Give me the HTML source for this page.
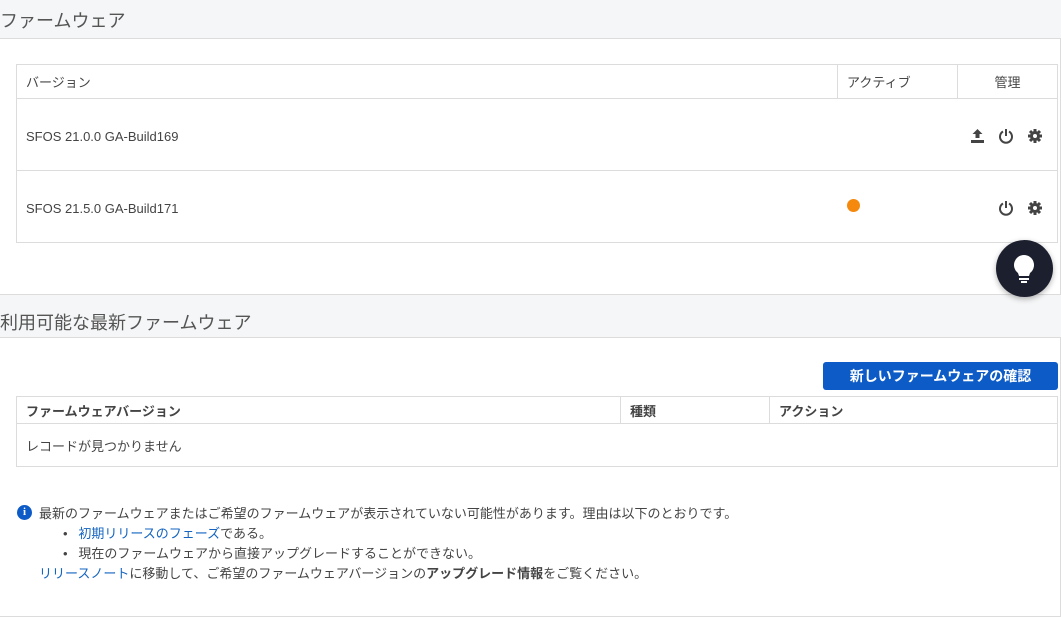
<!DOCTYPE html><html><head><meta charset="utf-8"><style>
*{box-sizing:border-box;margin:0;padding:0}
body{width:1061px;height:607px;overflow:hidden;background:#f5f6f7;font-family:"Liberation Sans","Noto Sans CJK JP",sans-serif;color:#444;position:relative}
.abs{position:absolute}
.h{font-size:18px;color:#555}
.panel{background:#fff;border:1px solid #dcdcdc}
table{border-collapse:collapse;position:absolute;font-size:13px;color:#444}
td{border:1px solid #dcdcdc;padding:0 9px}
.ic{position:absolute}
a{color:#1565c0;text-decoration:none}
</style></head><body>
<div class="abs h" style="left:0;top:7px">ファームウェア</div>
<div class="abs panel" style="left:0;top:38px;width:1061px;height:257px;border-left:none"></div>
<table style="left:16px;top:64px;width:1042px">
<tr style="height:34px"><td style="width:821px">バージョン</td><td style="width:120px">アクティブ</td><td style="text-align:center">管理</td></tr>
<tr style="height:72px"><td style="border-right:none;padding-top:4px">SFOS 21.0.0 GA-Build169</td><td style="border-left:none;border-right:none"></td><td style="border-left:none"></td></tr>
<tr style="height:72px"><td style="border-right:none;padding-top:4px">SFOS 21.5.0 GA-Build171</td><td style="border-left:none;border-right:none"></td><td style="border-left:none"></td></tr>
</table>
<div class="abs" style="left:847px;top:199px;width:13px;height:13px;border-radius:50%;background:#f5890d"></div>
<svg class="ic" style="left:969px;top:128px" width="17" height="16" viewBox="0 0 17 16"><path d="M8.5 1 L3.5 6 H6.5 V10 H10.5 V6 H13.5Z M2 12 H15 V15 H2Z" fill="#444"/></svg>
<svg class="ic" style="left:998px;top:128px" width="16" height="16" viewBox="0 0 16 16"><path d="M5 3.5 A6 6 0 1 0 11 3.5" fill="none" stroke="#444" stroke-width="2"/><path d="M8 1V8" stroke="#444" stroke-width="2"/></svg>
<svg class="ic" style="left:998px;top:200px" width="16" height="16" viewBox="0 0 16 16"><path d="M5 3.5 A6 6 0 1 0 11 3.5" fill="none" stroke="#444" stroke-width="2"/><path d="M8 1V8" stroke="#444" stroke-width="2"/></svg>
<svg class="ic" style="left:1027px;top:128px" width="16" height="16" viewBox="0 0 16 16"><g fill="#444"><circle cx="8" cy="8" r="5"/><g stroke="#444" stroke-width="3"><path d="M8 1V15M1 8H15M3 3L13 13M13 3L3 13"/></g></g><circle cx="8" cy="8" r="2" fill="#fff"/></svg>
<svg class="ic" style="left:1027px;top:200px" width="16" height="16" viewBox="0 0 16 16"><g fill="#444"><circle cx="8" cy="8" r="5"/><g stroke="#444" stroke-width="3"><path d="M8 1V15M1 8H15M3 3L13 13M13 3L3 13"/></g></g><circle cx="8" cy="8" r="2" fill="#fff"/></svg>
<div class="abs" style="left:996px;top:240px;width:57px;height:57px;border-radius:50%;background:#1c1f2e;box-shadow:0 2px 6px rgba(0,0,0,.3)"></div>
<svg class="ic" style="left:1011px;top:253px" width="26" height="32" viewBox="0 0 26 32"><path d="M13 2 A10 10 0 0 1 19 20 L18 23 H8 L7 20 A10 10 0 0 1 13 2Z" fill="#fff"/><rect x="8" y="25" width="10" height="2" fill="#fff"/><rect x="10" y="28" width="6" height="2" fill="#fff"/></svg>
<div class="abs h" style="left:0;top:309px">利用可能な最新ファームウェア</div>
<div class="abs panel" style="left:0;top:337px;width:1061px;height:280px;border-left:none"></div>
<div class="abs" style="left:823px;top:362px;width:235px;height:28px;background:#0d5bc6;border-radius:3px;color:#fff;font-size:14px;font-weight:bold;text-align:center;line-height:28px">新しいファームウェアの確認</div>
<table style="left:16px;top:396px;width:1042px;font-weight:bold">
<tr style="height:27px"><td style="width:604px">ファームウェアバージョン</td><td style="width:149px">種類</td><td>アクション</td></tr>
<tr style="height:43px;font-weight:normal"><td colspan="3">レコードが見つかりません</td></tr>
</table>
<div class="abs" style="left:17px;top:505px;width:15px;height:15px;border-radius:50%;background:#0d5bc6;color:#fff;font-size:11px;font-weight:bold;text-align:center;line-height:15px;font-family:'Liberation Serif',serif">i</div>
<div class="abs" style="left:39px;top:504px;font-size:13px;line-height:20px;color:#444">最新のファームウェアまたはご希望のファームウェアが表示されていない可能性があります。理由は以下のとおりです。<br>
<span style="margin-left:24px">•&nbsp;&nbsp;&nbsp;<a>初期リリースのフェーズ</a>である。</span><br>
<span style="margin-left:24px">•&nbsp;&nbsp;&nbsp;現在のファームウェアから直接アップグレードすることができない。</span><br>
<a>リリースノート</a>に移動して、ご希望のファームウェアバージョンの<b>アップグレード情報</b>をご覧ください。</div>
</body></html>
